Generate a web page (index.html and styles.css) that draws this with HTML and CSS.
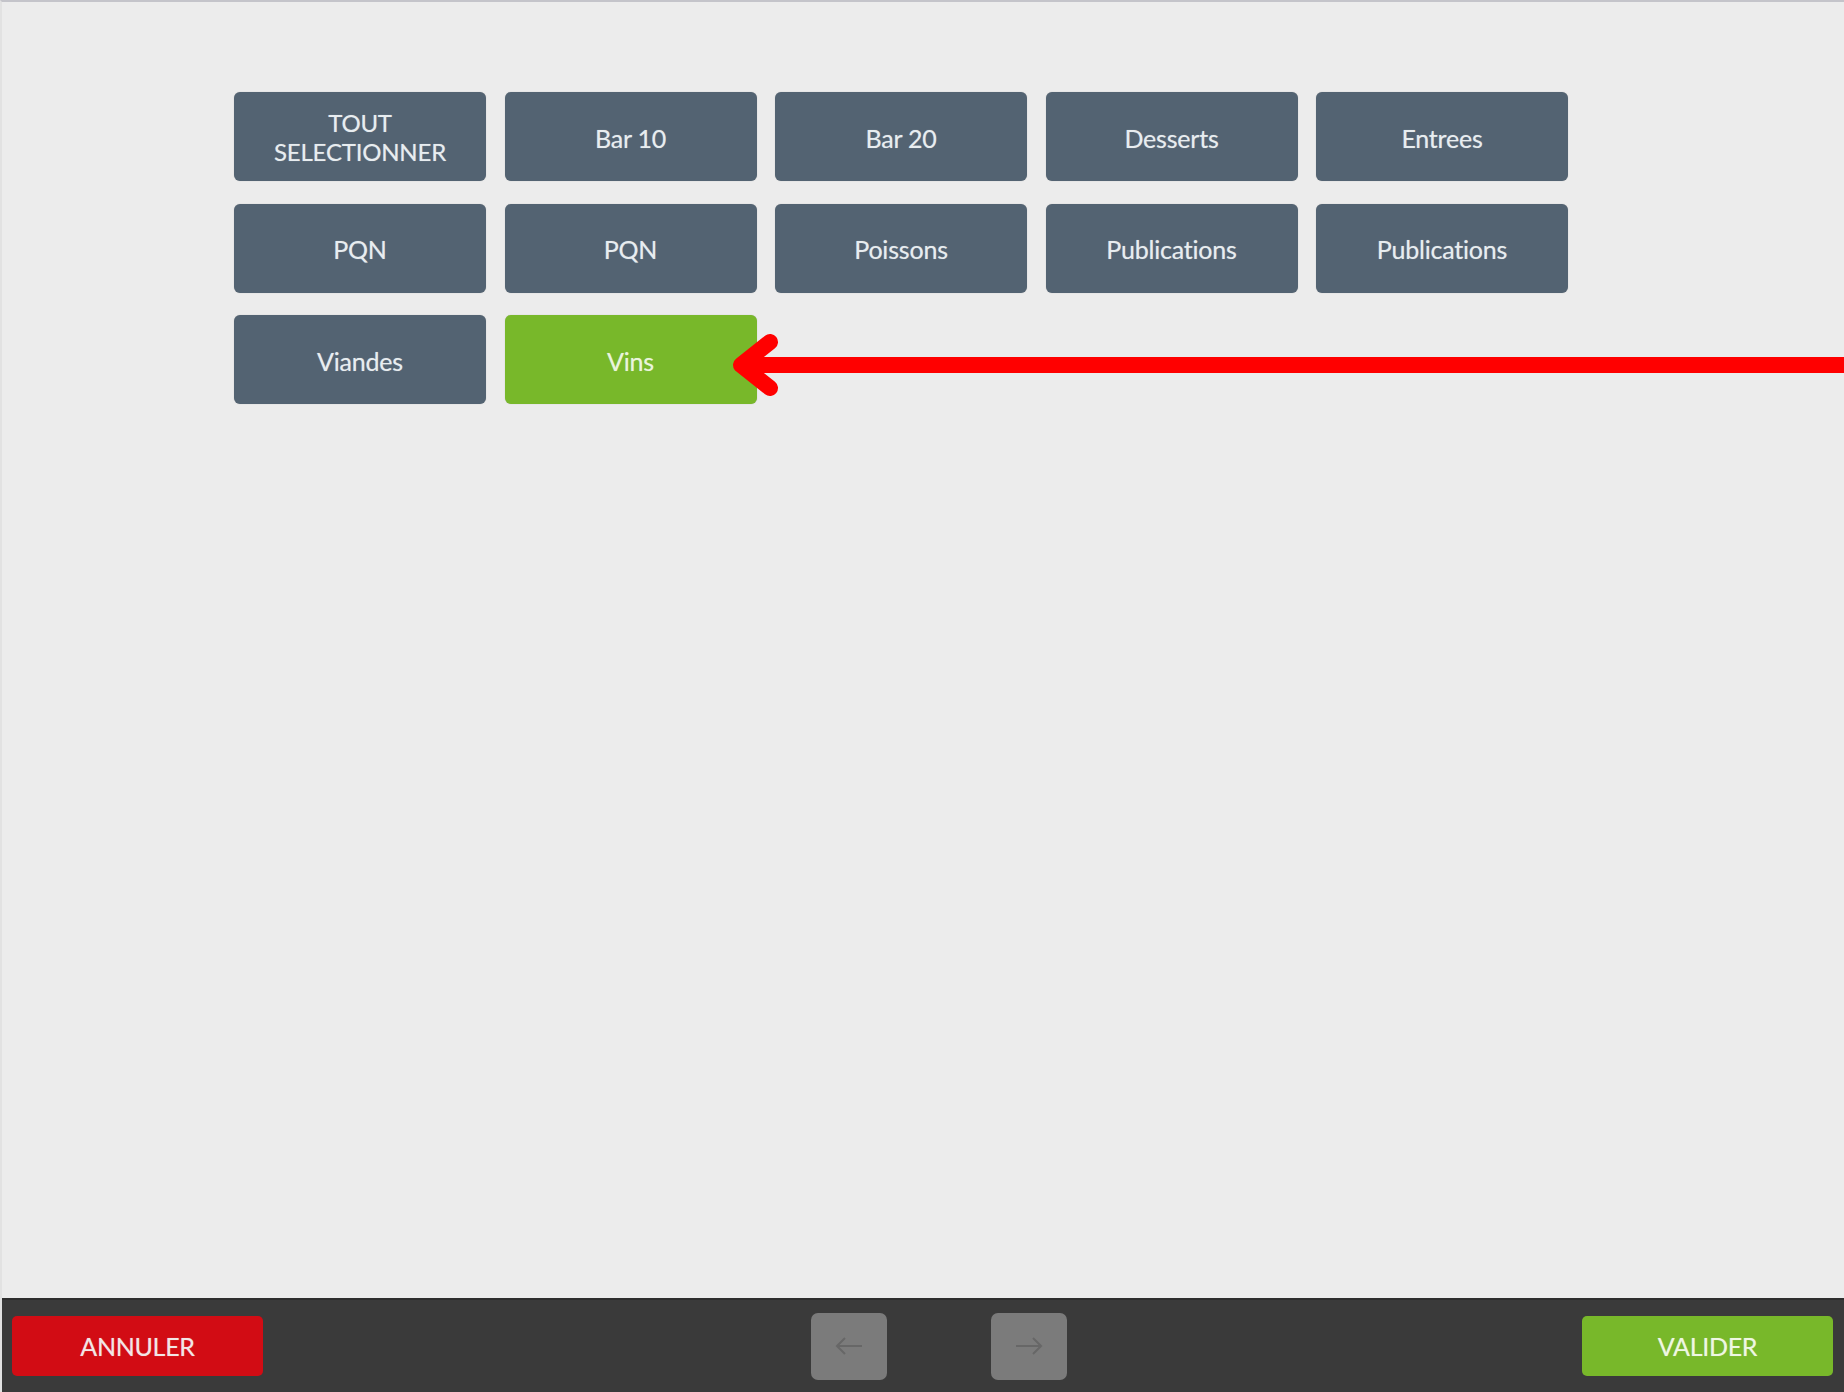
FILE: index.html
```html
<!DOCTYPE html>
<html lang="fr">
<head>
  <meta charset="UTF-8" />
  <meta name="viewport" content="width=device-width, initial-scale=1.0" />
  <title>Familles</title>
  <link rel="stylesheet" href="styles.css">
</head>
<body>
  <main class="content">
    <div class="family-grid">
      <div class="family all">TOUT<br>SELECTIONNER</div>
      <div class="family">Bar 10</div>
      <div class="family">Bar 20</div>
      <div class="family">Desserts</div>
      <div class="family">Entrees</div>
      <div class="family">PQN</div>
      <div class="family">PQN</div>
      <div class="family">Poissons</div>
      <div class="family">Publications</div>
      <div class="family">Publications</div>
      <div class="family">Viandes</div>
      <div class="family selected">Vins</div>
    </div>

    <svg class="pointer" viewBox="0 0 1130 80" xmlns="http://www.w3.org/2000/svg">
      <path d="M14 40 H1130" stroke="#ff0000" stroke-width="16" fill="none"/>
      <path d="M43 17 L14 40 L43 63" stroke="#ff0000" stroke-width="16" stroke-linecap="round" stroke-linejoin="round" fill="none"/>
    </svg>
  </main>

  <footer class="toolbar">
    <button class="action cancel">ANNULER</button>
    <div class="pager">
      <button class="page-btn">
        <svg viewBox="0 0 30 20" xmlns="http://www.w3.org/2000/svg">
          <path d="M28 10 H3 M11 2 L3 10 L11 18" stroke="#676767" stroke-width="2" fill="none"/>
        </svg>
      </button>
      <button class="page-btn">
        <svg viewBox="0 0 30 20" xmlns="http://www.w3.org/2000/svg">
          <path d="M2 10 H27 M19 2 L27 10 L19 18" stroke="#676767" stroke-width="2" fill="none"/>
        </svg>
      </button>
    </div>
    <button class="action confirm">VALIDER</button>
  </footer>
</body>
</html>
```

FILE: styles.css
```css
* {
  box-sizing: border-box;
}

body {
  margin: 0;
  height: 1392px;
  display: flex;
  flex-direction: column;
  font-family: 'Lato', 'Liberation Sans', sans-serif;
  background: #ececec;
  border-top: 2px solid #c4c4ca;
  border-left: 2px solid #e2e2e2;
  overflow: hidden;
}

.content {
  flex: 1;
  position: relative;
  padding: 90px 0 0 232px;
}

.family-grid {
  display: grid;
  grid-template-columns: repeat(5, 252px);
  grid-auto-rows: 89px;
  column-gap: 18.5px;
  row-gap: 22.5px;
}

.family {
  display: flex;
  align-items: center;
  justify-content: center;
  text-align: center;
  background: #536372;
  color: #e8edf0;
  border-radius: 6px;
  font-size: 25px;
  line-height: 30px;
  letter-spacing: -0.2px;
  padding-top: 2px;
  box-shadow: 0 0 1px rgba(0,0,0,0.25);
  text-shadow: 0 0 1px rgba(232,237,240,0.5);
}

/* two-line label needs a tighter box */
.family.all {
  font-size: 24px;
  line-height: 29px;
  padding-top: 0;
}

.family.selected {
  background: #78b82a;
  color: #eaf5dc;
}

.pointer {
  position: absolute;
  left: 725px;
  top: 323px;
  width: 1130px;
  height: 80px;
}

.toolbar {
  height: 94px;
  background: #3a3a3a;
  border-top: 2px solid #2e2e2e;
  display: flex;
  align-items: center;
  justify-content: space-between;
  padding: 0 11px 0 10px;
}

.action {
  width: 251px;
  height: 60px;
  border: none;
  border-radius: 5px;
  font-family: 'Lato', 'Liberation Sans', sans-serif;
  font-size: 25px;
  letter-spacing: -0.3px;
  color: #f2e6e6;
  text-shadow: 0 0 1px rgba(242,230,230,0.5);
}

.cancel {
  background: #d20c14;
}

.confirm {
  background: #78b82a;
  color: #eef7e2;
}

.pager {
  display: flex;
  gap: 104px;
  margin-left: 33px;
}

.page-btn {
  width: 76px;
  height: 67px;
  border: none;
  border-radius: 7px;
  background: #7b7b7b;
  display: flex;
  align-items: center;
  justify-content: center;
}

.page-btn svg {
  width: 30px;
  height: 20px;
}
```
